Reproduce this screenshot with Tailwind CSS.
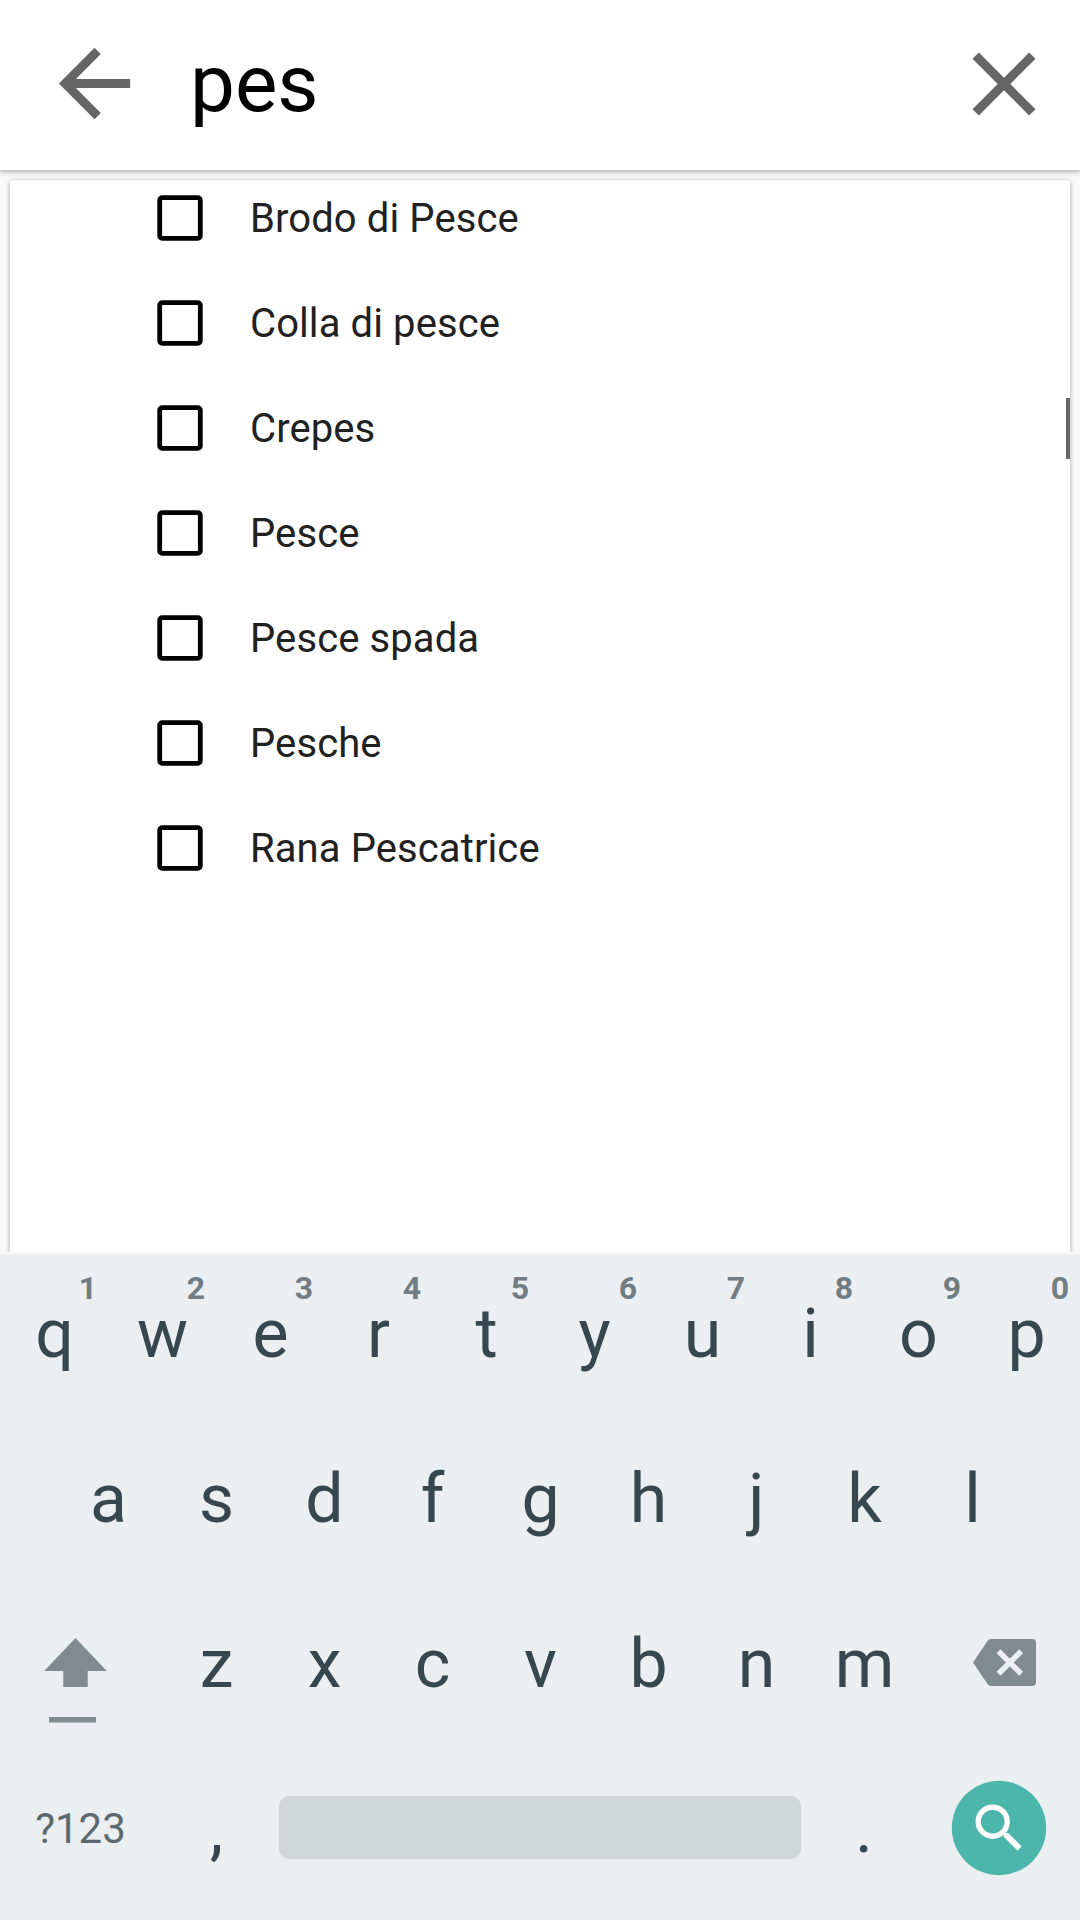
<!DOCTYPE html>
<html lang="it">
<head>
<meta charset="utf-8">
<title>Ingredienti</title>
<script src="https://cdn.jsdelivr.net/npm/@tailwindcss/browser@4"></script>
</head>
<body class="w-[1080px] h-[1920px] overflow-hidden flex flex-col bg-[#fafafa] font-['Roboto',sans-serif]">
  <header class="h-[170px] shrink-0 relative z-10 bg-white flex items-center pl-[41px] pr-[22px] pb-[3px] shadow-[0_1px_5px_1px_rgba(0,0,0,0.3)]">
    <svg class="w-[107px] h-[107px] shrink-0" viewBox="0 0 24 24" fill="#666"><path d="M20 11H7.83l5.59-5.59L12 4l-8 8 8 8 1.41-1.41L7.83 13H20v-2z"/></svg>
    <div class="flex-1 pl-[42px] text-[80px] leading-[168px] text-black">pes</div>
    <svg class="w-[108px] h-[108px] shrink-0" viewBox="0 0 24 24" fill="#666"><path d="M19 6.41L17.59 5 12 10.59 6.41 5 5 6.41 10.59 12 5 17.59 6.41 19 12 13.41 17.59 19 19 17.59 13.41 12z"/></svg>
  </header>

  <main class="h-[1082px] shrink-0 pt-[10px] px-[10px] overflow-hidden">
    <div class="relative h-[1090px] bg-white rounded-[3px] shadow-[0_1px_5px_rgba(0,0,0,0.35)]">
      <ul id="list" class="relative -top-[15px] pl-[147px]"></ul>
      <div class="absolute right-0 top-[218px] w-[4px] h-[61px] bg-[#666]"></div>
    </div>
  </main>

  <section class="h-[668px] shrink-0 bg-[#ebeff2] border-t-[2px] border-[#f5f7f8] text-[68px] leading-[165px] text-[#37474f] text-center">
    <div id="row1" class="flex h-[165px] -mt-[2px]"></div>
    <div id="row2" class="flex h-[165px] px-[54px]"></div>
    <div class="flex h-[165px]">
      <svg class="w-[162px] h-[165px]" viewBox="0 1582 162 165" fill="#808b8f"><path d="M75.5 1638L106.8 1671H87.7V1687H63.3V1671H44.2Z"/><path d="M49 1717h47v5.5h-47z"/></svg>
      <div id="row3" class="flex"></div>
      <svg class="w-[162px] h-[165px]" viewBox="918 1582 162 165"><path d="M991 1639h41q4 0 4 4v39q0 4-4 4h-41q-2 0-3.500-2L973 1662.500L987.500 1641q1.500-2 3.500-2z" fill="#808b8f"/><path d="M998.500 1651.200l22.600 22.600m0-22.600l-22.600 22.600" stroke="#ebeff2" stroke-width="5.500"/></svg>
    </div>
    <div class="flex h-[173px]">
      <div class="w-[162px] text-[42px] leading-[163px] pr-[1px] text-[#5c6a70]">?123</div>
      <div class="w-[108px] leading-[165px] pl-[1px]">,</div>
      <div class="w-[522px] h-[63px] mt-[49px] mx-[9px] rounded-[10px] bg-[#d1d6d9]"></div>
      <div class="w-[108px] leading-[165px]">.</div>
      <svg class="w-[162px] h-[173px]" viewBox="918 1747 162 173"><circle cx="999" cy="1828" r="47.200" fill="#4db6ac"/><circle cx="992.700" cy="1821.700" r="14.500" fill="none" stroke="#fff" stroke-width="5.400"/><path d="M1003 1832l4 4" stroke="#fff" stroke-width="3"/><path d="M1005.500 1834.500L1019.500 1848.500" stroke="#fff" stroke-width="6"/></svg>
    </div>
  </section>

<script>
  document.getElementById('list').innerHTML = ['Brodo di Pesce','Colla di pesce','Crepes','Pesce','Pesce spada','Pesche','Rana Pescatrice'].map(t =>
    `<li class="flex items-center h-[105px] gap-[47px]"><svg class="w-[46px] h-[46px]" viewBox="0 0 46 46"><rect x="2.700" y="2.700" width="40.600" height="40.600" rx="2.500" fill="none" stroke="#000" stroke-width="4.800"/></svg><span class="text-[40px] leading-[105px] pt-[2px] tracking-[0.1px] text-[#212121]">${t}</span></li>`).join('');
  const key = (c, h) => `<div class="relative w-[108px] pl-[1px]">${c}${h ? `<span class="absolute right-[11px] top-[17px] text-[32px] leading-[38px] font-bold text-[#717d83]">${h}</span>` : ''}</div>`;
  document.getElementById('row1').innerHTML = [...'qwertyuiop'].map((c, i) => key(c, String((i + 1) % 10))).join('');
  document.getElementById('row2').innerHTML = [...'asdfghjkl'].map(c => key(c)).join('');
  document.getElementById('row3').innerHTML = [...'zxcvbnm'].map(c => key(c)).join('');
</script>
</body>
</html>
